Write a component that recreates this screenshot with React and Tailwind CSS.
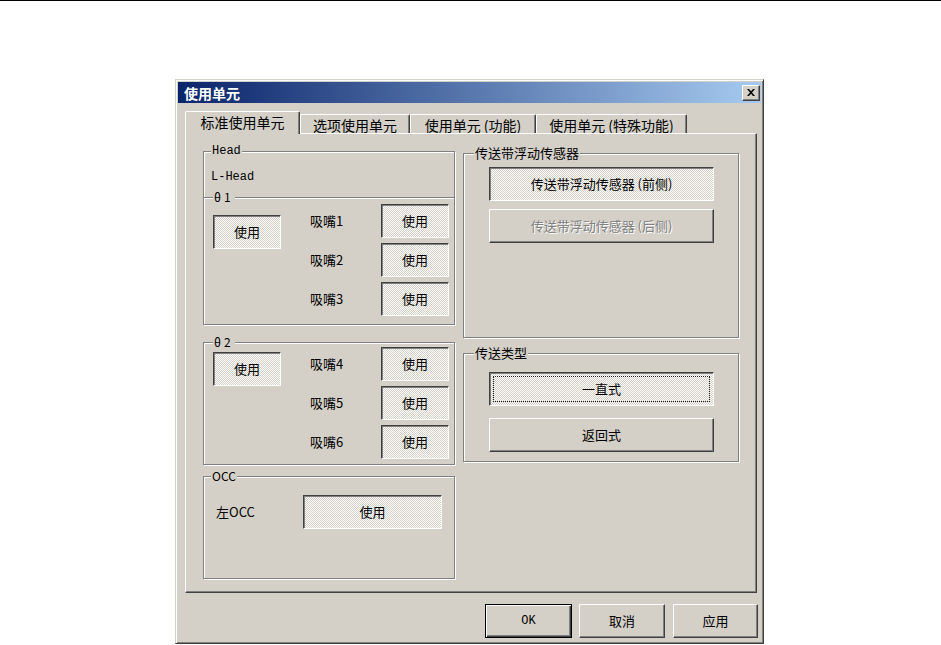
import React from "react";

const CJK = "font-['Noto_Sans_CJK_SC',sans-serif]";
const MONO = "font-['Liberation_Mono','Noto_Sans_CJK_SC',monospace]";

const RAISED =
  "bg-[#d4d0c8] border border-t-white border-l-white border-r-[#404040] border-b-[#404040] shadow-[inset_-1px_-1px_0_#808080]";
const PRESSED =
  "bg-[repeating-conic-gradient(#ffffff_0%_25%,#d4d0c8_0%_50%)] bg-[length:2px_2px] border border-t-[#404040] border-l-[#404040] border-r-white border-b-white shadow-[inset_1px_1px_0_#808080]";

const Btn = ({ on, disabled, className = "", children }) => (
  <button
    type="button"
    className={`flex shrink-0 items-center justify-center text-[13px] leading-[16px] ${CJK} ${
      disabled ? "text-[#808080] [text-shadow:1px_1px_0_#fff]" : "text-black"
    } ${on ? PRESSED : RAISED} ${className}`}
  >
    {children}
  </button>
);

const Group = ({ title, legend = "", className = "", children }) => (
  <fieldset
    className={`block border border-[#808080] shadow-[inset_1px_1px_0_#fff,1px_1px_0_#fff] ${className}`}
  >
    <legend className={`bg-[#d4d0c8] px-px text-black ${legend}`}>{title}</legend>
    {children}
  </fieldset>
);

const Tab = ({ sel, className = "", children }) => (
  <div
    className={`flex items-center justify-center bg-[#d4d0c8] border-t border-l border-r border-t-white border-l-white border-r-[#404040] rounded-t-[2px] shadow-[inset_-1px_0_0_#808080] text-[14px] leading-[16px] ${CJK} ${
      sel ? "relative z-10 h-[23px] -mb-px pb-[2px]" : "h-[19px] pt-[2px]"
    } ${className}`}
  >
    {children}
  </div>
);

const NozzleRows = ({ names }) => (
  <div className="ml-[29px] flex flex-col gap-[5px]">
    {names.map((n) => (
      <div key={n} className="flex items-center">
        <span className={`w-[71px] text-[13px] leading-[16px] ${CJK}`}>{n}</span>
        <Btn on className="w-[68px] h-[34px]">
          使用
        </Btn>
      </div>
    ))}
  </div>
);

export default function App() {
  return (
    <div className="w-[941px] h-[645px] bg-white border-t border-black overflow-hidden">
      <div className="mt-[78px] ml-[175px] w-[589px] h-[565px] p-[2px] bg-[#d4d0c8] border border-t-[#d4d0c8] border-l-[#d4d0c8] border-r-[#404040] border-b-[#404040] shadow-[inset_1px_1px_0_#fff,inset_-1px_-1px_0_#808080] flex flex-col">
        {/* title bar */}
        <div className="h-[21px] flex items-center justify-between pl-[6px] pr-[1px] bg-[linear-gradient(to_right,#0a246a,#a6caf0)]">
          <span className={`text-white font-bold text-[14px] leading-[16px] ${CJK}`}>使用单元</span>
          <button
            type="button"
            className={`w-[18px] h-[16px] flex items-center justify-center ${RAISED}`}
          >
            <svg width="8" height="7" viewBox="0 0 8 7">
              <path d="M0 0h2l2 2.3 2-2.3h2l-3 3.5 3 3.5h-2l-2-2.3-2 2.3h-2l3-3.5z" fill="#000" />
            </svg>
          </button>
        </div>

        {/* tabs */}
        <div className="mt-[8px] ml-[7px] flex items-end h-[22px]">
          <Tab sel className="w-[115px]">标准使用单元</Tab>
          <Tab className="w-[110px]">选项使用单元</Tab>
          <Tab className="w-[126px]">使用单元 (功能)</Tab>
          <Tab className="w-[151px]">使用单元 (特殊功能)</Tab>
        </div>

        {/* tab panel */}
        <div className="ml-[7px] w-[572px] h-[460px] border border-t-white border-l-white border-r-[#404040] border-b-[#404040] shadow-[inset_-1px_-1px_0_#808080] pl-[17px] pt-[11px] flex gap-[8px]">
          {/* left column */}
          <div className="w-[252px] flex flex-col">
            <Group title="Head" legend={`ml-[7px] text-[12px] leading-[12px] ${MONO}`}>
              <div className={`mt-[13px] ml-[7px] text-[12px] leading-[14px] ${MONO}`}>L-Head</div>
              <Group
                title="θ1"
                className="-mx-px -mb-px mt-[8px] h-[133px]"
                legend={`ml-[9px] text-[12px] leading-[10px] tracking-[3px] ${CJK}`}
              >
                <div className="flex">
                  <Btn on className="ml-[9px] mt-[13px] w-[68px] h-[34px]">
                    使用
                  </Btn>
                  <div className="mt-[2px]">
                    <NozzleRows names={["吸嘴1", "吸嘴2", "吸嘴3"]} />
                  </div>
                </div>
              </Group>
            </Group>

            <Group
              title="θ2"
              className="mt-[12px] h-[128px]"
              legend={`ml-[9px] text-[12px] leading-[10px] tracking-[3px] ${CJK}`}
            >
              <div className="flex">
                <Btn on className="ml-[9px] mt-[5px] w-[68px] h-[34px]">
                  使用
                </Btn>
                <NozzleRows names={["吸嘴4", "吸嘴5", "吸嘴6"]} />
              </div>
            </Group>

            <Group
              title="OCC"
              className="mt-[5px] h-[109px]"
              legend={`ml-[7px] text-[12px] leading-[12px] ${CJK}`}
            >
              <div className="mt-[13px] flex items-center">
                <span className={`ml-[12px] w-[87px] text-[13px] leading-[16px] ${CJK}`}>左OCC</span>
                <Btn on className="w-[139px] h-[34px]">
                  使用
                </Btn>
              </div>
            </Group>
          </div>

          {/* right column */}
          <div className="w-[276px] flex flex-col">
            <Group
              title="传送带浮动传感器"
              className="h-[193px]"
              legend={`ml-[10px] px-[2px] text-[13px] leading-[16px] ${CJK}`}
            >
              <div className="flex flex-col pl-[25px]">
                <Btn on className="mt-[6px] w-[225px] h-[34px]">
                  传送带浮动传感器 (前侧)
                </Btn>
                <Btn disabled className="mt-[8px] w-[225px] h-[34px]">
                  传送带浮动传感器 (后侧)
                </Btn>
              </div>
            </Group>

            <Group
              title="传送类型"
              className="mt-[7px] h-[117px]"
              legend={`ml-[10px] px-[2px] text-[13px] leading-[16px] ${CJK}`}
            >
              <div className="flex flex-col pl-[25px]">
                <Btn on className="mt-[11px] w-[225px] h-[34px] p-[3px]">
                  <span className="flex-1 self-stretch flex items-center justify-center border border-dotted border-[#202020]">
                    一直式
                  </span>
                </Btn>
                <Btn className="mt-[12px] w-[225px] h-[34px]">返回式</Btn>
              </div>
            </Group>
          </div>
        </div>

        {/* footer buttons */}
        <div className="mt-[11px] mr-[3px] flex justify-end">
          <button
            type="button"
            className={`w-[87px] h-[34px] flex items-center justify-center bg-[#d4d0c8] border border-black shadow-[inset_1px_1px_0_#fff,inset_-1px_-1px_0_#404040,inset_-2px_-2px_0_#808080] text-[12px] ${MONO}`}
          >
            OK
          </button>
          <Btn className="ml-[7px] w-[86px] h-[34px]">取消</Btn>
          <Btn className="ml-[8px] w-[85px] h-[34px]">应用</Btn>
        </div>
      </div>
    </div>
  );
}
